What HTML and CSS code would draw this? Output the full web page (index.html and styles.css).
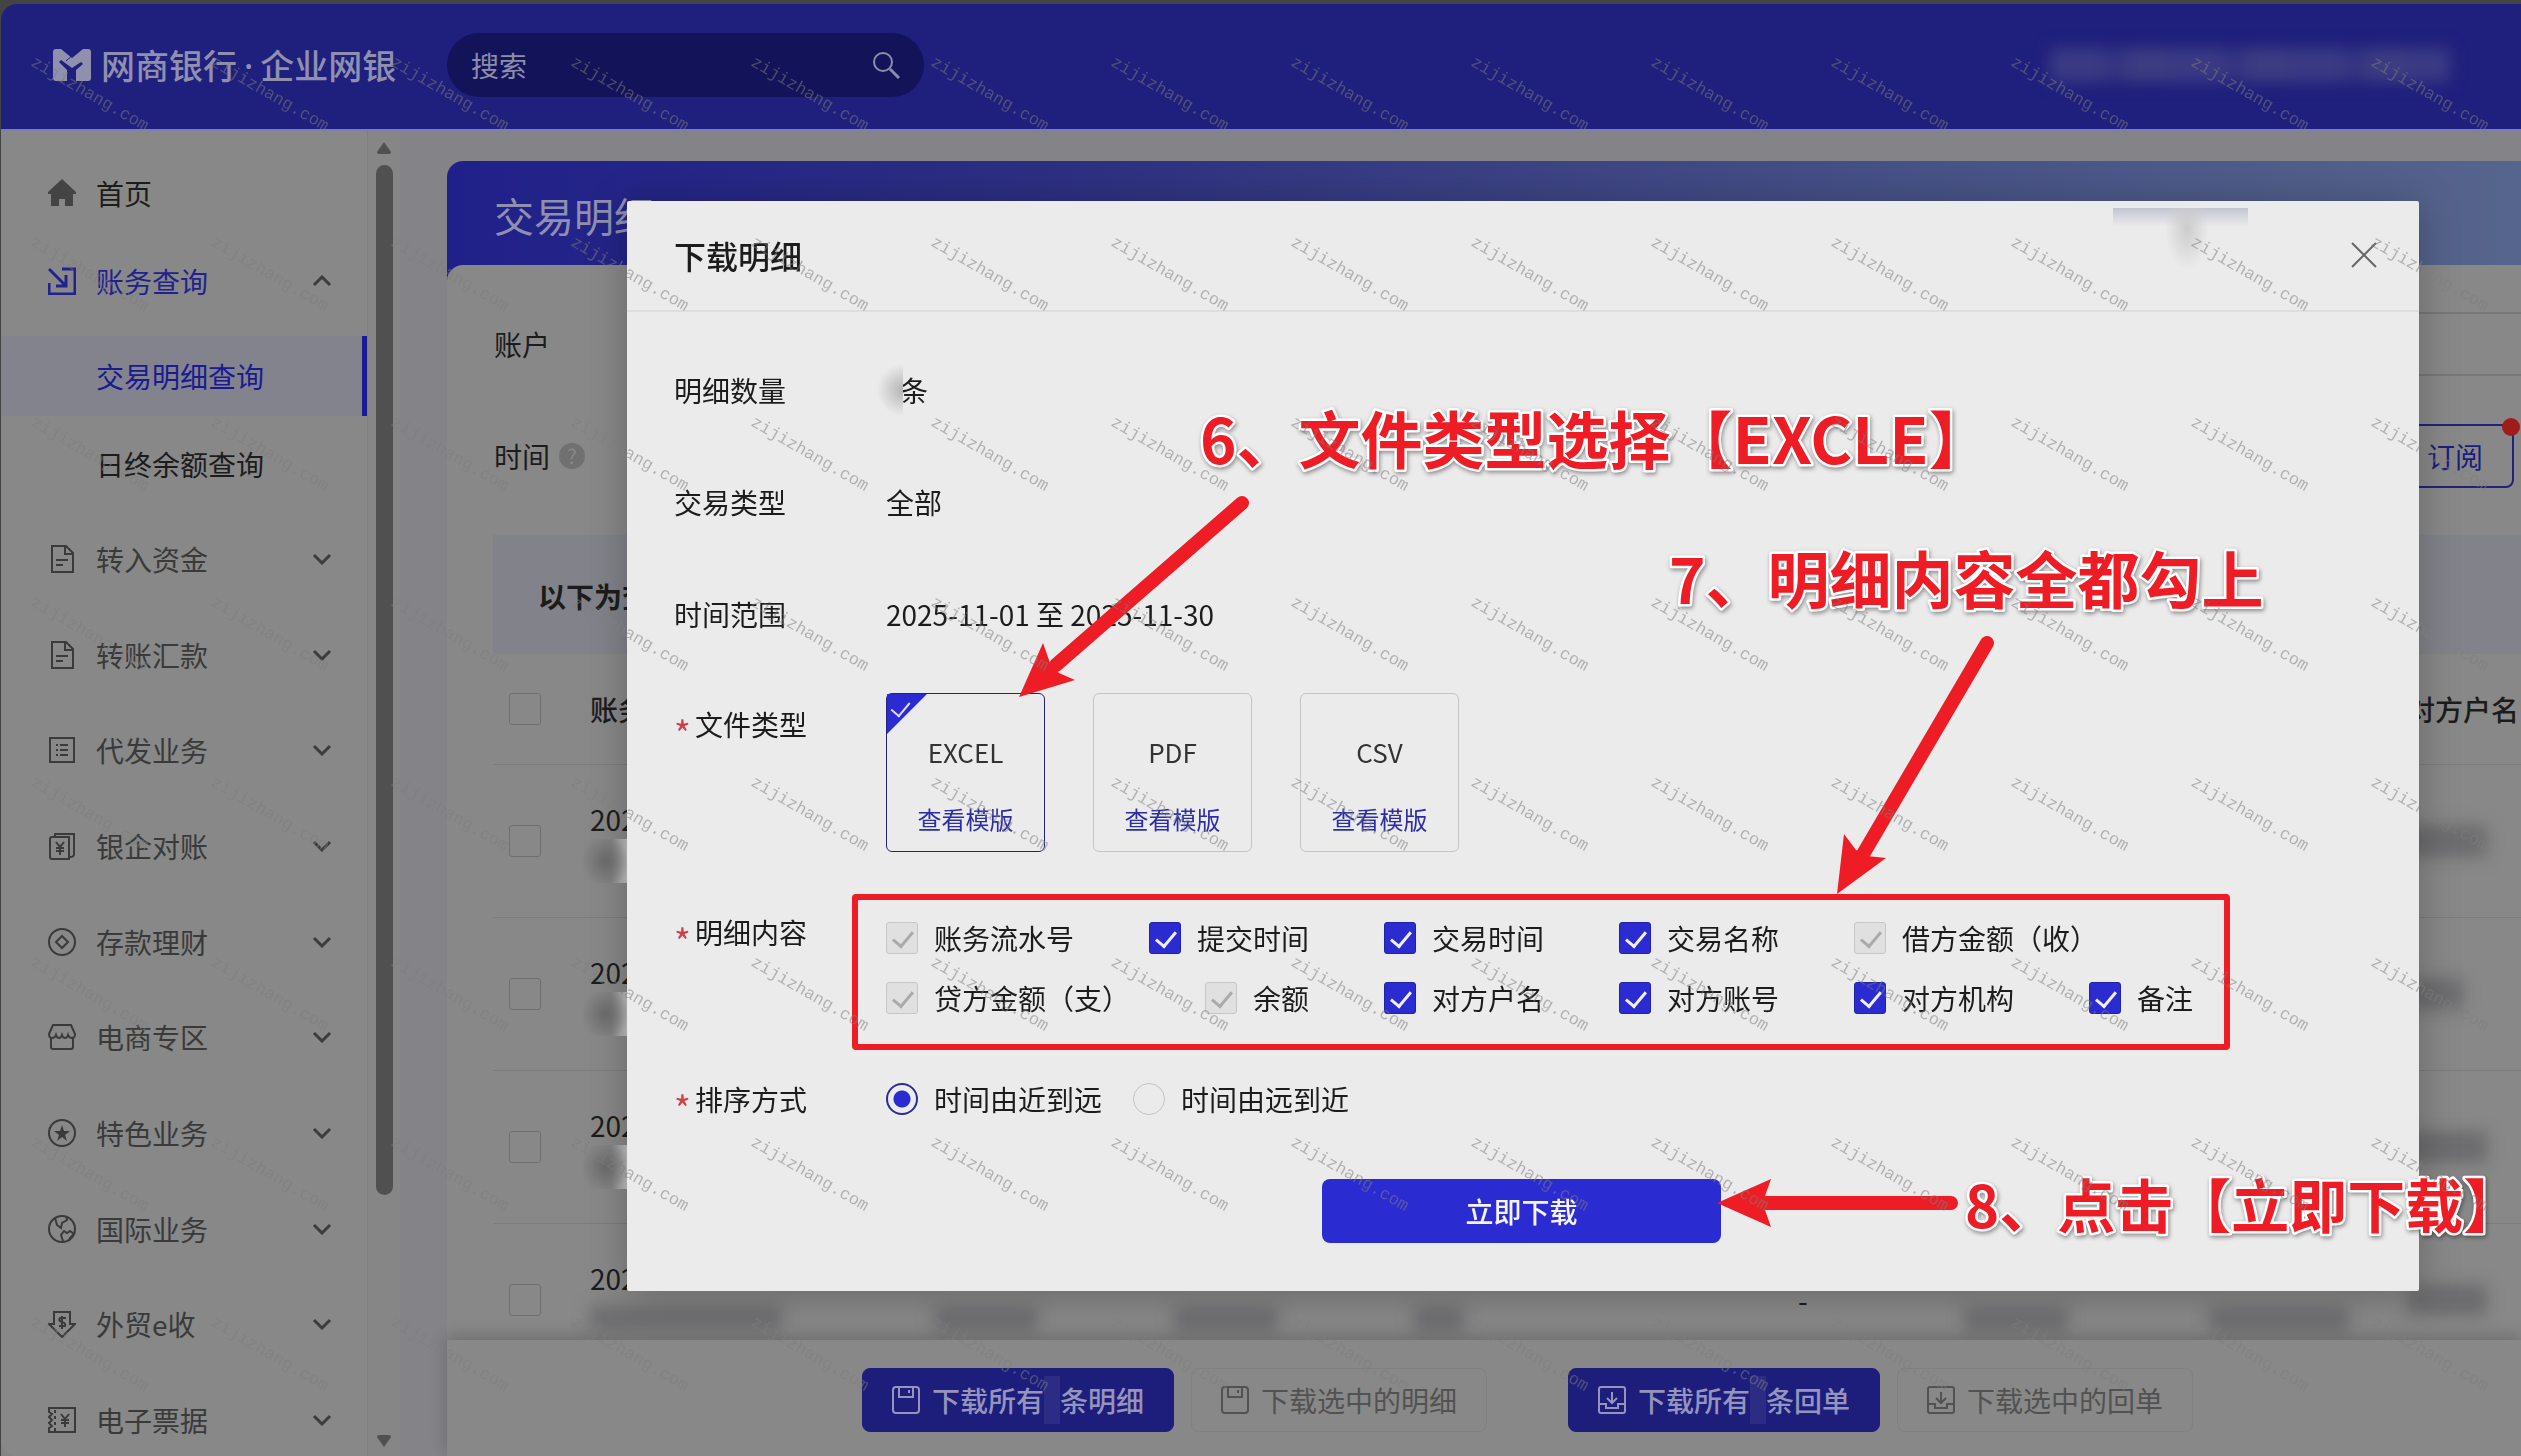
FILE: index.html
```html
<!DOCTYPE html>
<html lang="zh-CN">
<head>
<meta charset="utf-8">
<title>网商银行·企业网银</title>
<link rel="stylesheet" href="styles.css">
</head>
<body>
<svg class="sprite" aria-hidden="true">
  <symbol id="i-down" viewBox="0 0 20 12"><path d="M2 2l8 8 8-8" fill="none" stroke="currentColor" stroke-width="3"/></symbol>
  <symbol id="i-up" viewBox="0 0 20 12"><path d="M2 10l8-8 8 8" fill="none" stroke="currentColor" stroke-width="3"/></symbol>
  <symbol id="i-doc" viewBox="0 0 28 28"><path d="M4 1h14l7 7v19H4zM17 1v8h8M8 15h12M8 20h7" fill="none" stroke="currentColor" stroke-width="2"/></symbol>
  <symbol id="i-save" viewBox="0 0 28 30"><rect x="1" y="2" width="26" height="26" rx="3" fill="none" stroke="currentColor" stroke-width="2"/><path d="M7 2v10h14V2M17 5v3" fill="none" stroke="currentColor" stroke-width="2"/></symbol>
  <symbol id="i-tray" viewBox="0 0 28 30"><path d="M1 19V4q0-2 2-2h22q2 0 2 2v15M14 7v11M9 13l5 5 5-5M1 19v7q0 2 2 2h22q2 0 2-2v-7h-7v4H8v-4z" fill="none" stroke="currentColor" stroke-width="2"/></symbol>
</svg>

<div class="app">
  <header class="topbar">
    <a class="brand" href="#">
      <svg class="brand-mark" viewBox="0 0 38 32" aria-hidden="true">
        <path d="M3 0h5l11 9L30 0h5q3 0 3 3v26q0 3-3 3H23V21l7-6-2-2-9 6-11-8-2 2 8 8v11H3q-3 0-3-3V3q0-3 3-3z" fill="currentColor"/>
        <path d="M13 12l9-8" stroke="#1f1f7d" stroke-width="1"/>
      </svg>
      <span>网商银行<span class="brand-dot">·</span>企业网银</span>
    </a>
    <form class="search" role="search">
      <input type="text" placeholder="搜索" aria-label="搜索">
      <button type="button" aria-label="搜索">
        <svg viewBox="0 0 28 28"><circle cx="11" cy="11" r="9" fill="none" stroke="currentColor" stroke-width="2"/><path d="M18 18l9 9" stroke="currentColor" stroke-width="3"/></svg>
      </button>
    </form>
    <div class="account redact"></div>
  </header>

  <div class="workspace">
    <nav class="sidebar">
      <a class="item item-home" href="#"><svg class="icon" viewBox="0 0 28 28"><path d="M14 0l14 13v2h-3v12h-8v-7h-6v7H3V15H0v-2z" fill="#444"/></svg><span>首页</span></a>
      <button class="item item-open" type="button"><svg class="icon" viewBox="0 0 28 28"><path d="M14 2h13v25H1V16M1 2l17 17M18 8v11H8" fill="none" stroke="currentColor" stroke-width="3"/></svg><span>账务查询</span><svg class="chev"><use href="#i-up"/></svg></button>
      <div class="submenu">
        <a class="sub is-active" href="#">交易明细查询</a>
        <a class="sub" href="#">日终余额查询</a>
      </div>
      <div class="groups">
      <button class="item" type="button"><svg class="icon"><use href="#i-doc"/></svg><span>转入资金</span><svg class="chev"><use href="#i-down"/></svg></button>
      <button class="item" type="button"><svg class="icon"><use href="#i-doc"/></svg><span>转账汇款</span><svg class="chev"><use href="#i-down"/></svg></button>
      <button class="item" type="button"><svg class="icon" viewBox="0 0 28 28"><path d="M2 2h24v24H2zM8 9h2M12 9h8M8 14h2M12 14h8M8 19h2M12 19h8" fill="none" stroke="currentColor" stroke-width="2"/></svg><span>代发业务</span><svg class="chev"><use href="#i-down"/></svg></button>
      <button class="item" type="button"><svg class="icon" viewBox="0 0 28 28"><path d="M7 5V2h19v20q0 3-4 3M4 5h17v22H4q-2 0-2-2V7q0-2 2-2zM8 10l4 5 4-5M12 15v8M8 16h8M8 19h8" fill="none" stroke="currentColor" stroke-width="2"/></svg><span>银企对账</span><svg class="chev"><use href="#i-down"/></svg></button>
      <button class="item" type="button"><svg class="icon" viewBox="0 0 28 28"><circle cx="14" cy="14" r="13" fill="none" stroke="currentColor" stroke-width="2"/><path d="M14 8l6 6-6 6-6-6z" fill="none" stroke="currentColor" stroke-width="2"/></svg><span>存款理财</span><svg class="chev"><use href="#i-down"/></svg></button>
      <button class="item" type="button"><svg class="icon" viewBox="0 0 28 28"><path d="M5 2h18l4 9q0 4-3 4t-4-3q-1 3-3 3t-3-3q-1 3-3 3t-3-3q-1 3-4 3t-3-4zM3 15v9q0 2 2 2h18q2 0 2-2v-9" fill="none" stroke="currentColor" stroke-width="2"/></svg><span>电商专区</span><svg class="chev"><use href="#i-down"/></svg></button>
      <button class="item" type="button"><svg class="icon" viewBox="0 0 28 28"><circle cx="14" cy="14" r="13" fill="none" stroke="currentColor" stroke-width="2"/><path d="M14 6l2 6h6l-5 4 2 6-5-4-5 4 2-6-5-4h6z" fill="currentColor"/></svg><span>特色业务</span><svg class="chev"><use href="#i-down"/></svg></button>
      <button class="item" type="button"><svg class="icon" viewBox="0 0 28 28"><circle cx="14" cy="14" r="13" fill="none" stroke="currentColor" stroke-width="2"/><path d="M7 3l2 7 4 3 1-5 5-3-1-4M15 26l-2-6 3-4 3 2 3-2 4 3-4 4-1 3" fill="none" stroke="currentColor" stroke-width="2"/></svg><span>国际业务</span><svg class="chev"><use href="#i-down"/></svg></button>
      <button class="item" type="button"><svg class="icon" viewBox="0 0 28 28"><path d="M6 2h16v12h5L14 27 1 14h5zM18 8h-6q-2 3 2 4t3 4h-6M14 6v13" fill="none" stroke="currentColor" stroke-width="2"/></svg><span>外贸e收</span><svg class="chev"><use href="#i-down"/></svg></button>
      <button class="item" type="button"><svg class="icon" viewBox="0 0 28 28"><path d="M1 2h26v24H1v-4l3-2-3-3 3-3-3-3 3-3-3-2zM7 4v3M7 10v3M7 16v3M7 22v3M13 8l4 5 4-5M17 13v8M13 14h8M13 17h8" fill="none" stroke="currentColor" stroke-width="2"/></svg><span>电子票据</span><svg class="chev"><use href="#i-down"/></svg></button>
      </div>
    </nav>
    <div class="scrollbar" aria-hidden="true">
      <svg viewBox="0 0 16 12"><path d="M8 0l7 10q0 2-2 2H3q-2 0-2-2z" fill="#505050"/></svg>
      <div class="thumb"></div>
      <svg viewBox="0 0 16 12"><path d="M8 12l7-10q0-2-2-2H3Q1 0 1 2z" fill="#505050"/></svg>
    </div>

    <main class="content">
      <section class="banner">
        <h1>交易明细</h1>
        <div class="panel">
          <div class="filters">
            <div class="filter"><span class="filter-name">账户</span><span class="field"></span></div>
            <div class="filter"><span class="filter-name">时间</span><span class="help">?</span><button class="subscribe" type="button">订阅<i class="dot"></i></button></div>
          </div>
          <div class="notice">以下为查</div>
          <table class="records">
            <colgroup><col class="c-check"><col class="c-no"><col class="c-a"><col class="c-a"><col class="c-b"><col class="c-c"><col class="c-d"><col class="c-e"><col></colgroup>
            <thead>
              <tr><th><input class="box" type="checkbox" aria-label="全选"></th><th>账务</th><th></th><th></th><th></th><th></th><th></th><th></th><th>对方户名</th></tr>
            </thead>
            <tbody>
              <tr><td><input class="box" type="checkbox" aria-label="第1条"></td><td>2025<div class="edge"></div></td><td></td><td></td><td></td><td></td><td></td><td></td><td><div class="redact party"></div></td></tr>
              <tr><td><input class="box" type="checkbox" aria-label="第2条"></td><td>2025<div class="edge"></div></td><td></td><td></td><td></td><td></td><td></td><td></td><td><div class="redact party party-short"></div></td></tr>
              <tr><td><input class="box" type="checkbox" aria-label="第3条"></td><td>2025<div class="edge"></div></td><td></td><td></td><td></td><td></td><td></td><td></td><td><div class="redact party"></div></td></tr>
              <tr><td><input class="box" type="checkbox" aria-label="第4条"></td><td>2025<div class="redact low w-200"></div></td><td><div class="redact low solo w-100"></div></td><td><div class="redact low solo w-100"></div></td><td><div class="redact low solo w-50"></div></td><td>-</td><td><div class="redact low solo w-100"></div></td><td><div class="redact low solo w-140"></div></td><td><div class="redact party"></div></td></tr>
            </tbody>
          </table>
        </div>
      </section>
      <footer class="actions">
        <div class="pair">
          <button class="act act-primary" type="button"><svg><use href="#i-save"/></svg><span>下载所有<i class="patch"></i>条明细</span></button>
          <button class="act" type="button"><svg><use href="#i-save"/></svg><span>下载选中的明细</span></button>
        </div>
        <div class="pair">
          <button class="act act-primary" type="button"><svg><use href="#i-tray"/></svg><span>下载所有<i class="patch"></i>条回单</span></button>
          <button class="act" type="button"><svg><use href="#i-tray"/></svg><span>下载选中的回单</span></button>
        </div>
      </footer>
    </main>
  </div>
</div>

<div class="overlay">
  <section class="modal" role="dialog" aria-labelledby="modal-title">
    <header class="modal-head">
      <h2 id="modal-title">下载明细</h2>
      <button class="close" type="button" aria-label="关闭"><svg viewBox="0 0 26 26"><path d="M1 1l24 24M25 1L1 25" stroke="currentColor" stroke-width="2"/></svg></button>
      <i class="smear"></i>
    </header>
    <form class="modal-body">
      <div class="row"><span class="name">明细数量</span><span class="count">条</span></div>
      <div class="row"><span class="name">交易类型</span><span>全部</span></div>
      <div class="row"><span class="name">时间范围</span><span>2025-11-01 至 2025-11-30</span></div>
      <div class="row row-files">
        <span class="name"><b class="req">*</b>文件类型</span>
        <div class="files">
          <div class="file is-picked"><label><input type="radio" name="file" checked>EXCEL</label><a href="#">查看模版</a></div>
          <div class="file"><label><input type="radio" name="file">PDF</label><a href="#">查看模版</a></div>
          <div class="file"><label><input type="radio" name="file">CSV</label><a href="#">查看模版</a></div>
        </div>
      </div>
      <div class="row row-checks">
        <span class="name"><b class="req">*</b>明细内容</span>
        <div class="checks">
          <label><input class="tick" type="checkbox" checked disabled>账务流水号</label>
          <label><input class="tick" type="checkbox" checked>提交时间</label>
          <label><input class="tick" type="checkbox" checked>交易时间</label>
          <label><input class="tick" type="checkbox" checked>交易名称</label>
          <label><input class="tick" type="checkbox" checked disabled>借方金额（收）</label>
          <label><input class="tick" type="checkbox" checked disabled>贷方金额（支）</label>
          <label><input class="tick" type="checkbox" checked disabled>余额</label>
          <label><input class="tick" type="checkbox" checked>对方户名</label>
          <label><input class="tick" type="checkbox" checked>对方账号</label>
          <label><input class="tick" type="checkbox" checked>对方机构</label>
          <label><input class="tick" type="checkbox" checked>备注</label>
        </div>
      </div>
      <div class="row row-sort">
        <span class="name"><b class="req">*</b>排序方式</span>
        <div class="sorts">
          <label><input class="radio" type="radio" name="sort" checked>时间由近到远</label>
          <label><input class="radio" type="radio" name="sort">时间由远到近</label>
        </div>
      </div>
      <button class="submit" type="button">立即下载</button>
    </form>
  </section>
</div>

<svg class="notes">
  <rect x="855" y="897" width="1372" height="150" rx="1" fill="none" stroke="#ee1c24" stroke-width="6"/>
  <g stroke="#ee1c24" stroke-width="14" stroke-linecap="round">
    <path d="M1242 503L1056 665"/><path d="M1987 643L1862 856"/><path d="M1951 1203H1764"/>
  </g>
  <g fill="#ee1c24">
    <path d="M1019 697l24-54 7 20 9 10 16 7z"/>
    <path d="M1837 894l7-60 12 16 11 6 19 2z"/>
    <path d="M1717 1203l54-24-6 17v14l6 17z"/>
  </g>
  <g class="note-text">
    <text x="1200" y="464" font-size="62">6、文件类型选择【<tspan font-size="64">EXCLE</tspan>】</text>
    <text x="1669" y="604" font-size="62">7、明细内容全都勾上</text>
    <text x="1965" y="1228" font-size="58">8、点击【立即下载】</text>
  </g>
</svg>

<svg class="watermark" aria-hidden="true">
  <defs><pattern id="wm" width="180" height="180" patternUnits="userSpaceOnUse"><text x="30" y="65" transform="rotate(30 30 65)">zijizhang.com</text></pattern></defs>
  <rect width="100%" height="100%" fill="url(#wm)"/>
</svg>
</body>
</html>
```
FILE: styles.css
```css
* { box-sizing: border-box; }
html, body { margin: 0; height: 100%; overflow: hidden; background: #444; }
body {
  font-family: "Noto Sans CJK SC", "Noto Sans", sans-serif;
  font-size: 28px;
  line-height: 40px;
  color: #1c1c1c;
}
button, input { font: inherit; color: inherit; }
button { padding: 0; border: 0; background: none; }
a { color: inherit; text-decoration: none; }
h1, h2 { margin: 0; }
.sprite { display: none; }

.app {
  display: flex;
  flex-direction: column;
  height: 100vh;
  padding: 4px 0 0 1px;
}

/* top bar */
.topbar {
  display: flex;
  align-items: center;
  height: 127px;
  padding: 0 71px 3px 52px;
  background: #1f1f7d;
  border-bottom: 2px solid #7f7fae;
  border-top-left-radius: 16px;
}
.brand {
  display: flex;
  align-items: center;
  gap: 10px;
  width: 394px;
  color: #8f8fae;
  font-size: 34px;
  font-weight: 500;
  white-space: nowrap;
  line-height: 40px;
}
.brand-mark { width: 38px; height: 32px; }
.brand-dot { padding: 0 7px; font-family: "Noto Sans", sans-serif; }
.search {
  display: flex;
  align-items: center;
  justify-content: space-between;
  width: 477px;
  height: 64px;
  padding: 0 24px;
  border-radius: 32px;
  background: #13135a;
  color: #8c8cab;
}
.search input { width: 300px; border: 0; padding: 0; background: none; outline: 0; }
.search input::placeholder { color: #8c8cab; opacity: 1; }
.search button { display: flex; }
.search svg { width: 28px; height: 28px; }
.redact {
  filter: blur(8px);
  background: repeating-linear-gradient(90deg, #6c6c6e 0 40px, #757577 50px 60px);
}
.account {
  width: 400px;
  height: 34px;
  margin-left: auto;
  background: repeating-linear-gradient(90deg, #3b3b84 0 50px, #333381 60px 70px, #3d3d82 80px 120px);
}

/* sidebar */
.workspace { display: flex; flex: 1; min-height: 0; background: #848388; }
.sidebar {
  display: flex;
  flex-direction: column;
  width: 367px;
  padding-top: 18px;
  background: #888;
  border-right: 1px solid #7e7e7e;
  border-bottom-left-radius: 16px;
  overflow: hidden;
}
.item {
  display: flex;
  align-items: center;
  padding: 0 35px 0 47px;
  gap: 20px;
  color: #3a3a3a;
  text-align: left;
}
.item-home, .item-open { flex-shrink: 0; height: 88px; }
.item-home { color: #1c1c1c; }
.item-open { color: #22228f; }
.groups {
  display: grid;
  flex: 1;
  grid-auto-rows: minmax(80px, 1fr);
  margin-bottom: -12px;
}
.icon { width: 28px; height: 28px; flex-shrink: 0; }
.chev { width: 20px; height: 12px; margin-left: auto; color: #3c3c3c; }
.submenu { display: flex; flex-direction: column; gap: 8px; padding: 11px 0 7px; }
.sub { padding: 20px 0 20px 95px; }
.sub.is-active {
  color: #1a1a92;
  background: #82838c;
  border-right: 5px solid #1b1b94;
}
.scrollbar {
  display: flex;
  flex-direction: column;
  align-items: center;
  width: 32px;
  padding: 11px 0 9px;
  gap: 11px;
  background: #868686;
}
.scrollbar svg { width: 16px; height: 12px; flex-shrink: 0; }
.thumb { width: 17px; flex: 0 1 1030px; border-radius: 9px; background: #505050; }
.scrollbar svg:last-child { margin-top: auto; }

/* page behind the dialog */
.content {
  display: flex;
  flex-direction: column;
  flex: 1;
  min-width: 0;
  padding: 30px 0 0 47px;
}
.banner {
  display: flex;
  flex-direction: column;
  flex: 1;
  min-height: 0;
  border-top-left-radius: 16px;
  background: linear-gradient(90deg, #20208a 0, #2d3080 30%, #444e85 65%, #56658c 100%);
}
.banner h1 {
  padding: 24px 47px 20px;
  font-size: 40px;
  font-weight: 400;
  line-height: 60px;
  color: #8f8fb0;
}
.panel {
  flex: 1;
  min-height: 0;
  overflow: hidden;
  padding: 47px 0 0 46px;
  background: #888;
  border-top-left-radius: 16px;
}
.filters { display: flex; flex-direction: column; gap: 48px; }
.filter { display: flex; align-items: center; height: 64px; }
.filter-name { width: 57px; margin-left: 1px; white-space: nowrap; }
.field {
  flex: 1;
  height: 64px;
  margin-left: 130px;
  border: 2px solid #777;
  border-right: 0;
}
.help {
  width: 26px;
  height: 26px;
  margin-left: 8px;
  border-radius: 50%;
  background: #707070;
  color: #888;
  font-size: 20px;
  line-height: 26px;
  text-align: center;
}
.subscribe {
  position: relative;
  width: 144px;
  height: 64px;
  margin: 0 7px 0 auto;
  padding-left: 26px;
  border: 2px solid #22227c;
  border-radius: 8px;
  color: #1c1c80;
}
.dot {
  position: absolute;
  top: -8px;
  right: -8px;
  width: 18px;
  height: 18px;
  border-radius: 50%;
  background: #a01c18;
}
.notice {
  margin-top: 47px;
  padding: 41px 0 38px 45px;
  background: #82838a;
  font-weight: 700;
}
.records { width: 100%; table-layout: fixed; border-collapse: collapse; }
.c-check { width: 97px; }
.c-no { width: 344px; }
.c-a { width: 240px; }
.c-b { width: 384px; }
.c-c { width: 166px; }
.c-d { width: 245px; }
.c-e { width: 198px; }
.records th, .records td {
  padding: 0;
  text-align: left;
  white-space: nowrap;
  border-bottom: 1px solid #7c7c7c;
}
.records th { height: 110px; font-weight: 500; }
.records td { height: 153px; }
.box {
  display: block;
  appearance: none;
  width: 32px;
  height: 32px;
  margin: 0 0 0 16px;
  border: 1px solid #6f6f6f;
  border-radius: 3px;
}
.edge {
  width: 50px;
  height: 44px;
  margin-left: -9px;
  background:
    radial-gradient(ellipse 24px 26px at 24px 22px, #6c6c6e 0, transparent 100%),
    linear-gradient(90deg, #888 0, #888 60%, #d0d0d0 100%);
}
.party { width: 80px; height: 32px; background: #6c6c6e; }
.party-short { width: 56px; }
.low { height: 24px; margin: 8px 0 12px; background: #6d6c6f; }
.solo { margin-top: 50px; }
.w-50 { width: 50px; }
.w-100 { width: 104px; }
.w-140 { width: 140px; }
.w-200 { width: 192px; }

.actions {
  position: relative;
  display: flex;
  flex-shrink: 0;
  justify-content: center;
  gap: 81px;
  padding: 28px 0 24px 87px;
  background: #888;
  box-shadow: 0 -4px 16px rgba(0, 0, 0, .2);
}
.pair { display: flex; gap: 17px; }
.act {
  display: flex;
  align-items: center;
  gap: 12px;
  height: 64px;
  padding: 0 29px;
  border: 1px solid #808080;
  border-radius: 8px;
  color: #525252;
  white-space: nowrap;
}
.act svg { width: 28px; height: 30px; }
.act span { display: flex; }
.act-primary { border-color: #1d1d7c; background: #1d1d7c; color: #9494bd; font-weight: 500; }
.patch { width: 16px; height: 48px; margin: -4px 0; background: #2c2c84; }

/* dialog */
.overlay { position: fixed; inset: 0; padding: 201px 102px 0 627px; }
.modal {
  position: relative;
  background: #ebebeb;
  border-radius: 2px;
  box-shadow: 0 4px 40px rgba(0, 0, 0, .25);
}
.modal-head {
  display: flex;
  align-items: center;
  justify-content: space-between;
  padding: 30px 42px 31px 47px;
  border-bottom: 2px solid #dedede;
}
.modal-head h2 { font-size: 32px; font-weight: 500; line-height: 48px; }
.close { display: flex; color: #666; }
.close svg { width: 26px; height: 26px; }
.smear {
  position: absolute;
  top: 7px;
  right: 171px;
  width: 135px;
  height: 80px;
  background:
    radial-gradient(ellipse 22px 42px at 74px 20px, #ccc 0, transparent 100%),
    linear-gradient(#c3c4d2 0, #ebebeb 18px);
}
.modal-body { display: flex; flex-direction: column; padding: 58px 0 48px 47px; }
.row { display: flex; margin-bottom: 72px; }
.name { display: flex; flex: 0 0 212px; height: 40px; }
.req { width: 21px; padding-top: 8px; color: #d0404a; font-size: 36px; font-weight: 400; }
.count { position: relative; padding-left: 14px; }
.count::before {
  content: "";
  position: absolute;
  left: -9px;
  top: -6px;
  width: 26px;
  height: 52px;
  background: radial-gradient(ellipse 26px 26px at 100% 50%, #b4b4b4, #ebebeb);
}
.row:nth-child(3) { margin-bottom: 59px; }
.row-files { margin-bottom: 60px; }
.row-files .name { padding-top: 11px; }
.files { display: flex; gap: 48px; }
.file {
  display: flex;
  flex-direction: column;
  align-items: center;
  gap: 27px;
  width: 159px;
  height: 159px;
  padding-top: 38px;
  border: 1px solid #c4c4c4;
  border-radius: 6px;
  position: relative;
}
.file input { position: absolute; opacity: 0; }
.file label { color: #333; font-size: 26px; }
.file a { font-size: 24px; color: #2d2da8; }
.file.is-picked { border-color: #24247a; }
.file.is-picked::before {
  content: "";
  position: absolute;
  left: 0;
  top: 0;
  width: 40px;
  height: 40px;
  background: #2b2bd2;
  clip-path: polygon(0 0, 100% 0, 0 100%);
}
.file.is-picked::after {
  content: "";
  position: absolute;
  left: 8px;
  top: 4px;
  width: 9px;
  height: 16px;
  border: solid #dcdcf6;
  border-width: 0 2px 2px 0;
  transform: rotate(40deg);
}
.row-checks { margin-bottom: 65px; }
.checks { display: flex; flex-wrap: wrap; gap: 28px 75px; padding: 10px 160px 0 0; }
.checks label, .sorts label { display: flex; align-items: center; gap: 16px; height: 32px; }
.tick {
  appearance: none;
  position: relative;
  width: 32px;
  height: 32px;
  margin: 0;
  border-radius: 3px;
  background: #2b2bd2;
  border: 1px solid #2222a8;
}
.tick::after {
  content: "";
  position: absolute;
  left: 10px;
  top: 4px;
  width: 9px;
  height: 17px;
  border: solid #f0f0ff;
  border-width: 0 3px 3px 0;
  transform: rotate(40deg);
}
.tick:disabled { background: #e0e0e0; border-color: #c6c6c6; }
.tick:disabled::after { border-color: #aaa; }
.row-sort { margin-bottom: 60px; }
.sorts { display: flex; gap: 31px; padding: 4px 0; }
.radio {
  appearance: none;
  width: 32px;
  height: 32px;
  margin: 0;
  border: 1px solid #c4c4c4;
  border-radius: 50%;
}
.radio:checked {
  border: 2px solid #2a2a98;
  background: radial-gradient(circle, #2b2bd2 0 8px, transparent 9px);
}
.submit {
  width: 399px;
  height: 64px;
  margin-right: 50px;
  align-self: center;
  border-radius: 8px;
  background: #2b2bd2;
  color: #f4f4fc;
  font-weight: 500;
}

/* tutorial marks and watermark */
.notes, .watermark {
  position: fixed;
  inset: 0;
  width: 100%;
  height: 100%;
  pointer-events: none;
}
.note-text {
  font-weight: 700;
  fill: #ee1c24;
  stroke: #fff;
  stroke-width: 5px;
  stroke-linejoin: round;
  paint-order: stroke;
  filter: drop-shadow(1px 2px 2px rgba(0, 0, 0, .4));
}
.watermark text {
  font-family: "Liberation Mono", monospace;
  font-size: 17px;
  fill: rgba(125, 125, 125, .52);
}
```
